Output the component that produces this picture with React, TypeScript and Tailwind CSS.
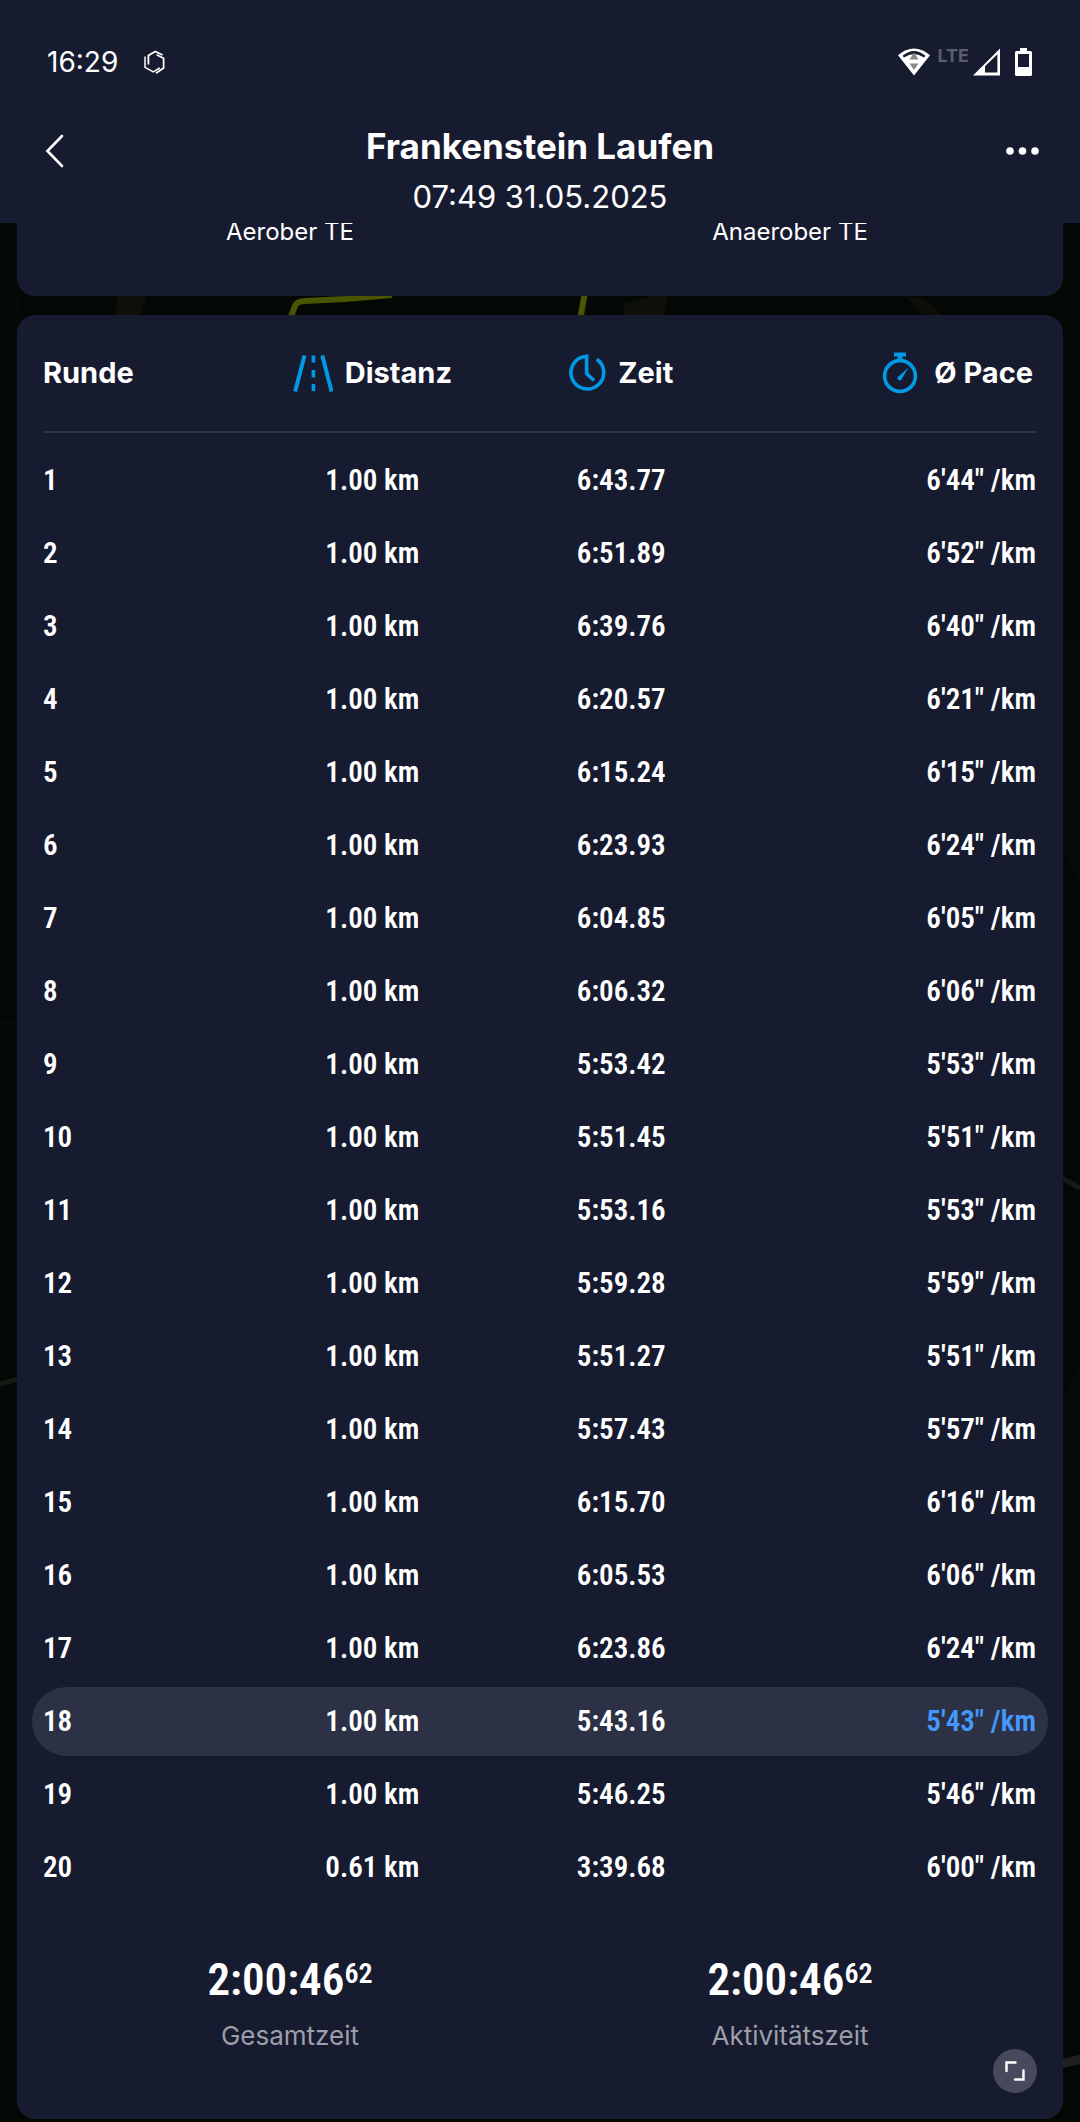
import clsx from "clsx";

type Lap = {
  distance: string;
  time: string;
  pace: string;
};

const laps: Lap[] = [
  { distance: "1.00", time: "6:43.77", pace: `6'44"` },
  { distance: "1.00", time: "6:51.89", pace: `6'52"` },
  { distance: "1.00", time: "6:39.76", pace: `6'40"` },
  { distance: "1.00", time: "6:20.57", pace: `6'21"` },
  { distance: "1.00", time: "6:15.24", pace: `6'15"` },
  { distance: "1.00", time: "6:23.93", pace: `6'24"` },
  { distance: "1.00", time: "6:04.85", pace: `6'05"` },
  { distance: "1.00", time: "6:06.32", pace: `6'06"` },
  { distance: "1.00", time: "5:53.42", pace: `5'53"` },
  { distance: "1.00", time: "5:51.45", pace: `5'51"` },
  { distance: "1.00", time: "5:53.16", pace: `5'53"` },
  { distance: "1.00", time: "5:59.28", pace: `5'59"` },
  { distance: "1.00", time: "5:51.27", pace: `5'51"` },
  { distance: "1.00", time: "5:57.43", pace: `5'57"` },
  { distance: "1.00", time: "6:15.70", pace: `6'16"` },
  { distance: "1.00", time: "6:05.53", pace: `6'06"` },
  { distance: "1.00", time: "6:23.86", pace: `6'24"` },
  { distance: "1.00", time: "5:43.16", pace: `5'43"` },
  { distance: "1.00", time: "5:46.25", pace: `5'46"` },
  { distance: "0.61", time: "3:39.68", pace: `6'00"` },
];

const FASTEST_LAP = 18;

function HexagonIcon() {
  return (
    <svg width="21" height="24" viewBox="0 0 21 24" fill="none" stroke="white">
      <path d="M4.4 14.5V5.6L11.3 1.5L18.6 5" strokeWidth="1.8" />
      <path d="M1 6.5V17.4L9.3 22L15.8 18" strokeWidth="1.5" />
      <path d="M12.6 4.8L19.6 8.2V18L12 23.2" strokeWidth="1.7" />
    </svg>
  );
}

function WifiIcon() {
  return (
    <svg width="32" height="28" viewBox="0 0 32 28">
      <path d="M0 7.2Q16 -6 32 7.2L16 27.5Z" fill="white" />
      <path d="M4.5 7.8Q16 -1.6 27.5 7.8L26 9.6Q16 2.5 6 9.6Z" fill="#171b30" />
      <path d="M16 4.5L20.5 11.5H11.5ZM11.5 15.5H20.5L16 22Z" fill="#86888c" />
    </svg>
  );
}

function SignalIcon() {
  return (
    <svg width="28" height="28" viewBox="0 0 28 28">
      <path d="M0 27.5L27 0.5V27.5Z" fill="white" />
      <path d="M12 24.5V18.3L24.4 6.2V24.5Z" fill="#171b30" />
    </svg>
  );
}

function BatteryIcon() {
  return (
    <svg width="17" height="28" viewBox="0 0 17 28">
      <path d="M5 0H12V3H15.5Q17 3 17 4.5V26.5Q17 28 15.5 28H1.5Q0 28 0 26.5V4.5Q0 3 1.5 3H5Z" fill="white" />
      <path d="M3 6H14V19H3Z" fill="#171b30" />
    </svg>
  );
}

function RoadIcon() {
  return (
    <svg width="40" height="37" viewBox="0 0 40 37" fill="none" stroke="#0099e6">
      <path d="M11.5 0.5L2.2 36.5M29.3 0.5L38.6 36.5" strokeWidth="4" />
      <path d="M20.4 0.5V7.5M20.4 15V22.5M20.4 29V36" strokeWidth="3.6" />
    </svg>
  );
}

function ClockIcon() {
  return (
    <svg width="37" height="38" viewBox="0 0 37 38" fill="none" stroke="#0099e6" strokeWidth="3.6">
      <path d="M27.8 5.2A16.4 16.4 0 1 1 17.6 2.2V19.5L25 26.5" />
    </svg>
  );
}

function StopwatchIcon() {
  return (
    <svg width="36" height="42" viewBox="0 0 36 42" fill="none">
      <circle cx="18" cy="24" r="15.4" stroke="#0099e6" strokeWidth="3.6" />
      <path d="M12 0.5H24V4.5H20.5V8H15.5V4.5H12Z" fill="#0099e6" />
      <path d="M26.5 15.5L20 26.5A2.3 2.3 0 1 1 16.6 24.2Z" fill="#0099e6" />
    </svg>
  );
}

// Dimmed satellite map behind the cards
function MapBackdrop() {
  return (
    <svg
      className="absolute inset-0 h-full w-full"
      viewBox="0 0 1080 2122"
      preserveAspectRatio="none"
      fill="none"
      aria-hidden="true"
    >
      <path d="M0 223H20V640L0 610ZM0 1020H20V1370H0ZM0 1690L20 1660V1870L0 1890Z" fill="#060a06" />
      <path d="M1060 640H1080V880L1060 850ZM1060 1400L1080 1360V1760H1060Z" fill="#070b08" />
      <path d="M118 296L146 296L140 318H114ZM625 303L652 296H668L664 318H622Z" fill="#0f0f0a" />
      <path d="M905 296L925 300L945 318H925Z" fill="#0d0d09" />
      <path d="M0 1384L18 1379M1062 1178L1080 1188" stroke="#171914" strokeWidth="5" />
      <path d="M1060 2064L1082 2059" stroke="#20201d" strokeWidth="9" />
      <path d="M289 322L295 306Q297 301 305 301L345 299L392 295" stroke="#4b5400" strokeWidth="6" />
      <path d="M585 292L580 320" stroke="#4b5400" strokeWidth="6" />
    </svg>
  );
}

function Total({ value, hundredths, label }: { value: string; hundredths: string; label: string }) {
  return (
    <div className="flex flex-col items-center">
      <div className="flex items-start font-['Roboto_Condensed',Roboto,sans-serif]">
        <span className="text-[45px] leading-[56px] font-semibold">{value}</span>
        <span className="text-[28px] leading-[44px] font-semibold">{hundredths}</span>
      </div>
      <div className="mt-3 text-[26px] leading-8 text-[#9c9ea8]">{label}</div>
    </div>
  );
}

export default function App() {
  return (
    <div className="relative min-h-screen bg-[#040805] pb-[3px] font-[Inter,sans-serif] text-white">
      <MapBackdrop />

      {/* Header */}
      <header className="relative z-10 bg-[#171b30]">
        <div className="flex h-[120px] items-center justify-between pt-1 pr-12 pl-[47px]">
          <div className="flex items-center gap-[26px]">
            <span className="text-[28px]">16:29</span>
            <HexagonIcon />
          </div>
          <div className="flex items-center">
            <WifiIcon />
            <span className="mr-1 ml-2 self-start text-[18px] leading-4 font-bold text-[#5a5d6d]">LTE</span>
            <SignalIcon />
            <span className="w-[14px]" />
            <BatteryIcon />
          </div>
        </div>

        <div className="grid h-[103px] grid-cols-[1fr_auto_1fr] items-start px-10">
          <button type="button" aria-label="Zurück" className="flex h-[62px] w-[30px] items-center justify-center">
            <svg width="20" height="34" viewBox="0 0 20 34" fill="none" stroke="white" strokeWidth="2.6" strokeLinecap="round">
              <path d="M17 2L2.4 17L17 32" />
            </svg>
          </button>
          <div className="text-center">
            <h1 className="text-[35px] leading-[52px] font-bold">Frankenstein Laufen</h1>
            <p className="text-[31px] leading-[50px]">07:49 31.05.2025</p>
          </div>
          <button type="button" aria-label="Mehr" className="flex h-[62px] items-center justify-center justify-self-end">
            <svg width="34" height="8" viewBox="0 0 34 8" fill="white">
              <circle cx="4" cy="4" r="3.8" />
              <circle cx="16.5" cy="4" r="3.8" />
              <circle cx="29" cy="4" r="3.8" />
            </svg>
          </button>
        </div>
      </header>

      <main className="relative px-[17px]">
        {/* Training effect, scrolled under the header */}
        <section className="-mt-6 grid grid-cols-2 rounded-[18px] bg-[#171b30] px-[23px] pt-[17px] pb-12 text-center text-[24px] leading-8">
          <div>Aerober TE</div>
          <div>Anaerober TE</div>
        </section>

        {/* Laps */}
        <section className="relative mt-[19px] rounded-[18px] bg-[#171b30] px-[15px] pb-[67px]">
          <table className="w-full table-fixed border-separate border-spacing-x-0 border-spacing-y-1">
            <thead className="text-[29px] font-bold">
              <tr>
                <th className="w-[21%] p-0 pb-[9px]">
                  <div className="ml-[11px] flex h-[114px] items-center border-b-2 border-[#2d3145] pb-1">Runde</div>
                </th>
                <th className="w-[25%] p-0 pb-[9px]">
                  <div className="flex h-[114px] items-center justify-center gap-3 border-b-2 border-[#2d3145] pb-1">
                    <RoadIcon />
                    Distanz
                  </div>
                </th>
                <th className="w-[24%] p-0 pb-[9px]">
                  <div className="flex h-[114px] items-center justify-center gap-3 border-b-2 border-[#2d3145] pb-1">
                    <ClockIcon />
                    Zeit
                  </div>
                </th>
                <th className="p-0 pb-[9px]">
                  <div className="mr-[11px] flex h-[114px] items-center justify-end gap-4 border-b-2 border-[#2d3145] pr-1 pb-1">
                    <StopwatchIcon />
                    Ø Pace
                  </div>
                </th>
              </tr>
            </thead>
            <tbody className="font-['Roboto_Condensed',Roboto,sans-serif] text-[29px] font-semibold">
              {laps.map((lap, i) => {
                const fastest = i + 1 === FASTEST_LAP;
                return (
                  <tr key={i} className={clsx("h-[69px]", fastest && "*:bg-[#2d3145]")}>
                    <td className="rounded-l-full p-0 pl-[11px]">{i + 1}</td>
                    <td className="p-0 text-center">{lap.distance} km</td>
                    <td className="p-0 text-center">{lap.time}</td>
                    <td className={clsx("rounded-r-full p-0 pr-3 text-right", fastest && "text-[#4499ff]")}>
                      {lap.pace} /km
                    </td>
                  </tr>
                );
              })}
            </tbody>
          </table>

          <div className="mt-[46px] grid grid-cols-2 px-2">
            <Total value="2:00:46" hundredths="62" label="Gesamtzeit" />
            <Total value="2:00:46" hundredths="62" label="Aktivitätszeit" />
          </div>

          <button
            type="button"
            aria-label="Vergrößern"
            className="absolute right-[26px] bottom-[26px] flex size-11 items-center justify-center rounded-full bg-[#464a5c]"
          >
            <svg width="20" height="20" viewBox="0 0 20 20" fill="none" stroke="white" strokeWidth="2.4" strokeLinecap="round">
              <path d="M1.5 10V1.5H10.5M18.5 9.5V18.5H10" />
            </svg>
          </button>
        </section>
      </main>
    </div>
  );
}
